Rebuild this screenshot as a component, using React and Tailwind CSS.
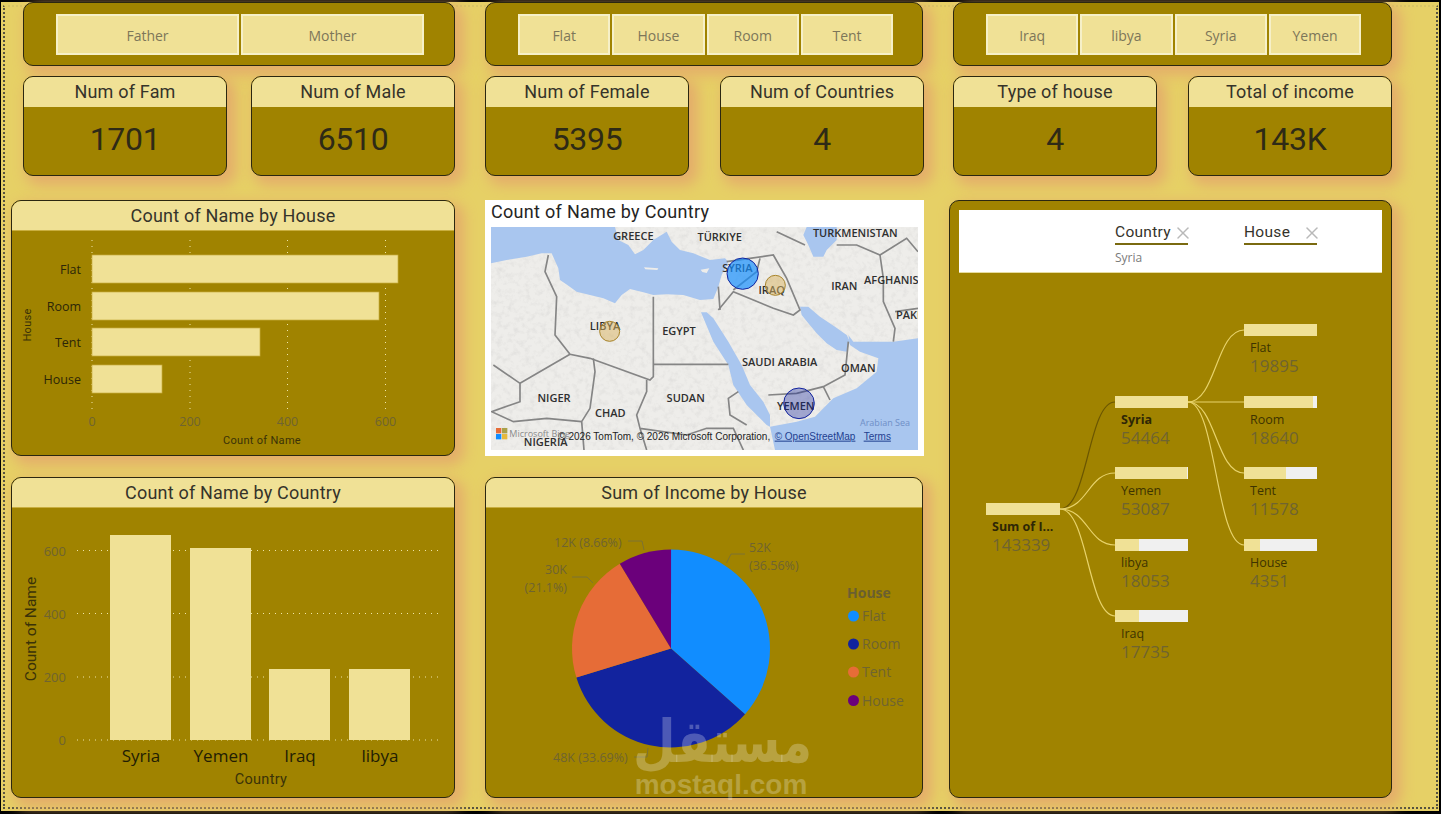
import { X } from 'lucide-react'

const din = "font-['Roboto',sans-serif] font-[450]"
const segoe = "font-['Open_Sans',sans-serif]"
const cardShadow = 'shadow-[6px_6px_14px_3px_#e4ad6a]'

function Slicer({ items, wide }) {
  return (
    <div className={`h-[64px] rounded-[10px] border border-[#2b2710] bg-[#a08300] px-[32px] py-[11px] flex gap-[2px] ${cardShadow}`}>
      {items.map((t) => (
        <div
          key={t}
          className={`${wide ? 'w-[183px]' : 'w-[92.3px]'} shrink-0 h-[41px] border-2 border-[#f6f0c8] bg-[#f0e196] flex items-center justify-center pt-[2px] text-[14px] text-[#7d7659] ${segoe}`}
        >
          {t}
        </div>
      ))}
    </div>
  )
}

function Kpi({ title, value }) {
  return (
    <div className={`w-[204px] h-[100px] rounded-[10px] border border-[#2b2710] bg-[#a08300] overflow-hidden ${cardShadow}`}>
      <div className={`h-[30px] bg-[#f0e196] text-center text-[18px] leading-[30px] tracking-[0.2px] text-[#35332a] ${din}`}>{title}</div>
      <div className={`text-center text-[32px] leading-[65px] tracking-[-0.3px] text-[#2e2a16] ${din}`}>{value}</div>
    </div>
  )
}

function Panel({ title, className, children }) {
  return (
    <div className={`rounded-[10px] border border-[#2b2710] bg-[#a08300] overflow-hidden ${cardShadow} ${className}`}>
      <div className={`h-[30px] bg-[#f0e196] border-b border-[#c9ae3f] text-center text-[18px] leading-[29px] tracking-[0.2px] text-[#35332a] ${din}`}>{title}</div>
      {children}
    </div>
  )
}

function HouseChart() {
  const bars = [
    ['Flat', 255, 398],
    ['Room', 292, 379],
    ['Tent', 328, 260],
    ['House', 365, 162],
  ]
  return (
    <svg viewBox="12 231 442 224" width="442" height="224" className="block">
      {[92, 190, 287.5, 385.5].map((x) => (
        <line key={x} x1={x} x2={x} y1="240" y2="410" stroke="#efe5a8" strokeDasharray="1 5" />
      ))}
      {bars.map(([name, y, end]) => (
        <g key={name}>
          <rect x="92" y={y} width={end - 92} height="28" fill="#f0e196" stroke="#c9ae3f" strokeWidth="0.7" />
          <text x="81" y={y + 18.5} textAnchor="end" className={`text-[12.5px] fill-[#2c2608] ${segoe}`}>{name}</text>
        </g>
      ))}
      {[[92, '0'], [190, '200'], [287.5, '400'], [385.5, '600']].map(([x, t]) => (
        <text key={t} x={x} y="426" textAnchor="middle" className={`text-[12.5px] fill-[#6f6430] ${segoe}`}>{t}</text>
      ))}
      <text x="262" y="444" textAnchor="middle" className={`text-[11px] tracking-[0.3px] fill-[#3a3208] ${din}`}>Count of Name</text>
      <text transform="translate(31 325) rotate(-90)" textAnchor="middle" className={`text-[11px] tracking-[0.3px] fill-[#3a3208] ${din}`}>House</text>
    </svg>
  )
}

function CountryChart() {
  const bars = [
    ['Syria', 110, 535],
    ['Yemen', 190, 548],
    ['Iraq', 269, 669],
    ['libya', 349, 669],
  ]
  return (
    <svg viewBox="12 508 442 289" width="442" height="289" className="block">
      {[[550.5, '600'], [613.5, '400'], [677, '200'], [740, '0']].map(([y, t]) => (
        <g key={t}>
          <line x1="77" x2="443" y1={y} y2={y} stroke="#efe5a8" strokeDasharray="1 5" />
          <text x="66" y={y + 5} textAnchor="end" className={`text-[13px] fill-[#6f6430] ${segoe}`}>{t}</text>
        </g>
      ))}
      {bars.map(([name, x, top]) => (
        <g key={name}>
          <rect x={x} y={top} width="61" height={740 - top} fill="#f0e196" />
          <text x={x + 31} y="762" textAnchor="middle" className={`text-[17px] fill-[#221d04] ${segoe}`}>{name}</text>
        </g>
      ))}
      <text x="261" y="784" textAnchor="middle" className={`text-[14.5px] tracking-[0.3px] fill-[#3a3208] ${din}`}>Country</text>
      <text transform="translate(36 629) rotate(-90)" textAnchor="middle" className={`text-[15.5px] fill-[#3a3208] ${din}`}>Count of Name</text>
    </svg>
  )
}

function MapVisual() {
  const labels = [
    ['GREECE', 460, 134], ['TÜRKIYE', 719, 137], ['TURKMENISTAN', 1126, 127], ['AFGHANISTAN', 1152, 268, 'start'],
    ['IRAN', 1093, 285], ['PAKI', 1248, 372, 'start'], ['SYRIA', 772, 232], ['IRAQ', 875, 298], ['LIBYA', 375, 406],
    ['EGYPT', 597, 419], ['SAUDI ARABIA', 899, 512], ['OMAN', 1135, 532], ['NIGER', 222, 620], ['CHAD', 391, 667],
    ['SUDAN', 617, 620], ['YEMEN', 947, 646], ['NIGERIA', 197, 754],
  ]
  const borders = [
    'M205 180 L195 230 L230 305 L225 420 L270 478 L330 490 L510 555 L520 545 L520 305',
    'M520 508 L745 508',
    'M340 490 L345 530 L330 640 L305 680 L312 765',
    'M270 478 L120 565 L40 510 M120 565 L120 620 L35 650 L100 680 L200 670 L305 680',
    'M500 555 L500 590 L470 660 L480 700 L500 765 M480 700 L620 720 L680 700 L760 700 L790 765',
    'M775 590 L745 610 L750 660 L800 690',
    'M715 345 L760 290 L880 340 L940 360 L960 345 L920 250 L880 180 L740 200',
    'M840 190 L830 230 L760 285 M715 275 L720 345',
    'M865 600 L950 595 L1030 575 L1095 540 L1105 440 M1030 575 L1050 615',
    'M890 110 L975 150 M1070 150 L1130 150 L1200 180 L1280 130 L1314 170',
    'M1200 180 L1210 250 L1210 320 L1245 400 L1240 440 M1245 350 L1314 340',
  ]
  return (
    <svg viewBox="33 96 1281 669" width="427" height="223" className="block">
      <defs>
        <filter id="relief" x="0" y="0" width="100%" height="100%">
          <feTurbulence type="fractalNoise" baseFrequency="0.06" numOctaves="4" seed="7" />
          <feColorMatrix values="0 0 0 0 0.45  0 0 0 0 0.45  0 0 0 0 0.45  1.6 0 0 0 -0.72" />
        </filter>
      </defs>
      <rect x="33" y="96" width="1281" height="669" fill="#eeedea" />
      <rect x="33" y="96" width="1281" height="669" filter="url(#relief)" opacity="0.3" />
      <path
        d="M33 96 L405 96 L415 135 L445 150 L465 178 L490 165 L520 135 L560 110 L575 140 L600 165 L640 175 L690 195 L735 190 L745 200 L725 240 L715 275 L700 312 L660 315 L610 300 L560 298 L520 300 L490 292 L450 282 L425 300 L405 325 L370 310 L330 300 L290 290 L262 270 L240 255 L235 220 L215 175 L185 175 L140 185 L80 195 L33 205 Z"
        fill="#a9c6ef"
      />
      <path d="M492 217 L535 220 L532 225 L496 223 Z M662 224 L688 220 L680 234 L667 231 Z" fill="#eeedea" />
      <path d="M980 96 L1070 96 L1070 135 L1040 165 L1030 185 L1000 185 L985 150 L970 120 Z" fill="#a9c6ef" />
      <path d="M960 335 L985 335 L1020 365 L1065 395 L1100 420 L1110 440 L1100 470 L1070 465 L1040 445 L1010 415 L985 385 L965 360 Z" fill="#a9c6ef" />
      <path d="M1105 420 L1120 440 L1240 440 L1314 430 L1314 765 L885 765 L870 695 L950 680 L1005 665 L1060 610 L1130 580 L1190 530 L1195 490 L1140 470 L1110 450 Z" fill="#a9c6ef" />
      <path d="M663 352 L700 440 L745 510 L760 570 L800 630 L860 690 L870 695 L870 660 L850 620 L810 570 L785 510 L745 440 L700 370 L680 352 Z" fill="#a9c6ef" />
      {borders.map((d) => (
        <path key={d} d={d} fill="none" stroke="#858585" strokeWidth="5" />
      ))}
      {labels.map(([t, x, y, anchor]) => (
        <text key={t} x={x} y={y} textAnchor={anchor || 'middle'} className={`text-[33px] font-semibold fill-[#2f2f2f] ${segoe}`}>{t}</text>
      ))}
      <circle cx="788" cy="236" r="47" fill="#118dff" fillOpacity="0.68" stroke="#12239e" strokeWidth="3" />
      <circle cx="886" cy="271" r="30" fill="#d9b45f" fillOpacity="0.5" stroke="#a8842a" strokeWidth="3" />
      <circle cx="389" cy="409" r="30" fill="#d9b45f" fillOpacity="0.5" stroke="#a8842a" strokeWidth="3" />
      <circle cx="957" cy="625" r="46" fill="#12239e" fillOpacity="0.35" stroke="#12239e" strokeWidth="3" />
      <text x="1140" y="694" className={`text-[27px] fill-[#6f8fc7] ${segoe}`}>Arabian Sea</text>
      <rect x="48" y="699" width="16" height="16" fill="#e66c37" />
      <rect x="66" y="699" width="16" height="16" fill="#a9a14a" />
      <rect x="48" y="717" width="16" height="16" fill="#118dff" />
      <rect x="66" y="717" width="16" height="16" fill="#e6b93c" />
      <text x="88" y="726" className={`text-[27px] fill-[#8b8b8b] ${segoe}`}>Microsoft Bing</text>
      <g className="text-[30px] font-['Liberation_Sans',sans-serif]">
        <text x="235" y="734" className="fill-[#222222]">© 2026 TomTom, © 2026 Microsoft Corporation,</text>
        <text x="884" y="734" className="fill-[#1f3f8f] underline">© OpenStreetMap</text>
        <text x="1151" y="734" className="fill-[#1f3f8f] underline">Terms</text>
      </g>
    </svg>
  )
}

function PieChart() {
  const slices = [
    [36.56, '#118dff'],
    [33.69, '#12239e'],
    [21.1, '#e66c37'],
    [8.66, '#6b007b'],
  ]
  const cx = 671
  const cy = 648.5
  const r = 99
  let start = 0
  const point = (pct) => {
    const a = (pct / 100) * 2 * Math.PI
    return `${cx + r * Math.sin(a)} ${cy - r * Math.cos(a)}`
  }
  const paths = slices.map(([pct, color]) => {
    const d = `M${cx} ${cy} L${point(start)} A${r} ${r} 0 0 1 ${point(start + pct)} Z`
    start += pct
    return <path key={color} d={d} fill={color} />
  })
  const labelClass = `text-[12.5px] fill-[#6f6430] ${segoe}`
  const legend = [['Flat', '#118dff', 616], ['Room', '#12239e', 644], ['Tent', '#e66c37', 672], ['House', '#6b007b', 700.5]]
  return (
    <svg viewBox="486 508 436 289" width="436" height="289" className="block">
      {paths}
      <g fill="none" stroke="#7d7232" strokeWidth="1">
        <path d="M726.5 563 L731 554 L745 554" />
        <path d="M628 541 L642 541 L644 550" />
        <path d="M572 577 L587 577 L593 583" />
        <path d="M634 757 L647 757 L648 748" />
      </g>
      <text x="749" y="551.5" className={labelClass}>52K</text>
      <text x="749" y="569.5" className={labelClass}>(36.56%)</text>
      <text x="554" y="547" className={labelClass}>12K (8.66%)</text>
      <text x="567" y="574" textAnchor="end" className={labelClass}>30K</text>
      <text x="567" y="591.5" textAnchor="end" className={labelClass}>(21.1%)</text>
      <text x="553" y="762" className={labelClass}>48K (33.69%)</text>
      <text x="847" y="598" className={`text-[14px] font-bold fill-[#6a5f2f] ${segoe}`}>House</text>
      {legend.map(([t, color, y]) => (
        <g key={t}>
          <circle cx="853.5" cy={y} r="5.5" fill={color} />
          <text x="862" y={y + 5} className={`text-[14px] fill-[#6f6430] ${segoe}`}>{t}</text>
        </g>
      ))}
    </svg>
  )
}

const nodes = [
  { name: 'Sum of I...', value: '143339', fill: 100, pos: 'left-[36px] top-[230px] w-[74px]', bold: true },
  { name: 'Syria', value: '54464', fill: 100, pos: 'left-[165px] top-[123px] w-[73px]', bold: true },
  { name: 'Yemen', value: '53087', fill: 98, pos: 'left-[165px] top-[194px] w-[73px]' },
  { name: 'libya', value: '18053', fill: 33, pos: 'left-[165px] top-[266px] w-[73px]' },
  { name: 'Iraq', value: '17735', fill: 33, pos: 'left-[165px] top-[337px] w-[73px]' },
  { name: 'Flat', value: '19895', fill: 100, pos: 'left-[294px] top-[51px] w-[73px]' },
  { name: 'Room', value: '18640', fill: 94, pos: 'left-[294px] top-[123px] w-[73px]' },
  { name: 'Tent', value: '11578', fill: 58, pos: 'left-[294px] top-[194px] w-[73px]' },
  { name: 'House', value: '4351', fill: 22, pos: 'left-[294px] top-[266px] w-[73px]' },
]

function TreeNode({ node }) {
  return (
    <div className={`absolute ${node.pos}`}>
      <div className="h-[12px] bg-[#f0f0f0] flex">
        <div className="bg-[#f0e196]" style={{ width: `${node.fill}%` }} />
      </div>
      <div className={`mt-[5px] pl-[6px] h-[14px] text-[12.5px] leading-[14px] whitespace-nowrap ${node.bold ? 'font-bold text-[#2e2706]' : 'text-[#3d3300]'} ${segoe}`}>
        {node.name}
      </div>
      <div className={`pl-[6px] text-[17px] leading-[22px] text-[#6f6430] ${segoe}`}>{node.value}</div>
    </div>
  )
}

function Decomposition() {
  const links = [
    ['M1060 509 C1088 509 1088 402 1115 402', '#6b5600'],
    ['M1060 509 C1088 509 1088 473 1115 473', '#e8d36b'],
    ['M1060 509 C1088 509 1088 545 1115 545', '#e8d36b'],
    ['M1060 509 C1088 509 1088 616 1115 616', '#e8d36b'],
    ['M1188 402 C1216 402 1216 330 1244 330', '#e8d36b'],
    ['M1188 402 L1244 402', '#e8d36b'],
    ['M1188 402 C1216 402 1216 473 1244 473', '#e8d36b'],
    ['M1188 402 C1216 402 1216 545 1244 545', '#e8d36b'],
  ]
  return (
    <div className={`w-[443px] h-[598px] rounded-[10px] border border-[#2b2710] bg-[#a08300] overflow-hidden flex flex-col ${cardShadow}`}>
      <div className="h-[63px] mt-[9px] mx-[9px] bg-white border-b border-[#e6dca0] pl-[156px] pt-[12px] flex gap-[56px]">
        {[['Country', 'Syria'], ['House', '']].map(([label, picked]) => (
          <div key={label} className="w-[73px]">
            <div className={`h-[23px] border-b-2 border-[#7a6a10] flex justify-between items-start text-[15.5px] leading-[21px] tracking-[0.3px] text-[#35332a] ${din}`}>
              <span>{label}</span>
              <X size={20} strokeWidth={1.8} className="mt-[1px] -mr-[5px] text-[#b9b9b9]" />
            </div>
            <div className={`mt-[5px] text-[12px] leading-[16px] text-[#7b7b7b] ${segoe}`}>{picked}</div>
          </div>
        ))}
      </div>
      <div className="relative flex-1">
        <svg viewBox="950 273 441 524" className="absolute inset-0 w-full h-full">
          {links.map(([d, color]) => (
            <path key={d} d={d} fill="none" stroke={color} strokeWidth="1.2" />
          ))}
        </svg>
        {nodes.map((n) => (
          <TreeNode key={n.pos} node={n} />
        ))}
      </div>
    </div>
  )
}

export default function App() {
  return (
    <div className="relative w-[1441px] h-[814px] overflow-hidden bg-black pt-[2px] pb-[3px] pl-[1px] pr-[2px]">
      <div className="relative h-full bg-[#e6d066]">
        {/* dotted report frame, sits under the cards */}
        <div className="absolute left-[2px] right-[1px] top-[3px] bottom-[2px] border-2 border-dotted border-[#55523f] border-t-[#d8c565]" />

        <div className="relative flex pl-[10px]">
          <div className="w-[444px] flex flex-col">
            <div className="ml-[12px] w-[432px]">
              <Slicer items={['Father', 'Mother']} wide />
              <div className="mt-[10px] flex justify-between">
                <Kpi title="Num of Fam" value="1701" />
                <Kpi title="Num of Male" value="6510" />
              </div>
            </div>
            <Panel title="Count of Name by House" className="mt-[24px] h-[256px]">
              <HouseChart />
            </Panel>
            <Panel title="Count of Name by Country" className="mt-[21px] h-[321px]">
              <CountryChart />
            </Panel>
          </div>

          <div className="ml-[30px] w-[439px] flex flex-col">
            <div className="w-[438px]">
              <Slicer items={['Flat', 'House', 'Room', 'Tent']} />
            </div>
            <div className="mt-[10px] flex justify-between">
              <Kpi title="Num of Female" value="5395" />
              <Kpi title="Num of Countries" value="4" />
            </div>
            <div className="mt-[24px] h-[256px] bg-white px-[6px]">
              <div className={`h-[27px] text-[18px] leading-[24px] tracking-[0.3px] text-[#252423] ${din}`}>Count of Name by Country</div>
              <MapVisual />
            </div>
            <Panel title="Sum of Income by House" className="mt-[21px] h-[321px] w-[438px]">
              <PieChart />
            </Panel>
          </div>

          <div className="ml-[25px] w-[443px] flex flex-col">
            <div className="ml-[4px] w-[439px]">
              <Slicer items={['Iraq', 'libya', 'Syria', 'Yemen']} />
              <div className="mt-[10px] flex justify-between">
                <Kpi title="Type of house" value="4" />
                <Kpi title="Total of income" value="143K" />
              </div>
            </div>
            <div className="mt-[24px]">
              <Decomposition />
            </div>
          </div>
        </div>

        {/* mostaql watermark over the pie panel */}
        <div className="absolute left-[632px] top-[713px] w-[176px] text-center text-white/25 pointer-events-none font-bold">
          <div className="h-[56px] text-[49px] leading-[56px] scale-y-[1.2] font-['DejaVu_Sans',sans-serif]">مستقل</div>
          <div className="text-[28px] leading-[27px] font-['Liberation_Sans',sans-serif]">mostaql.com</div>
        </div>
      </div>
    </div>
  )
}
